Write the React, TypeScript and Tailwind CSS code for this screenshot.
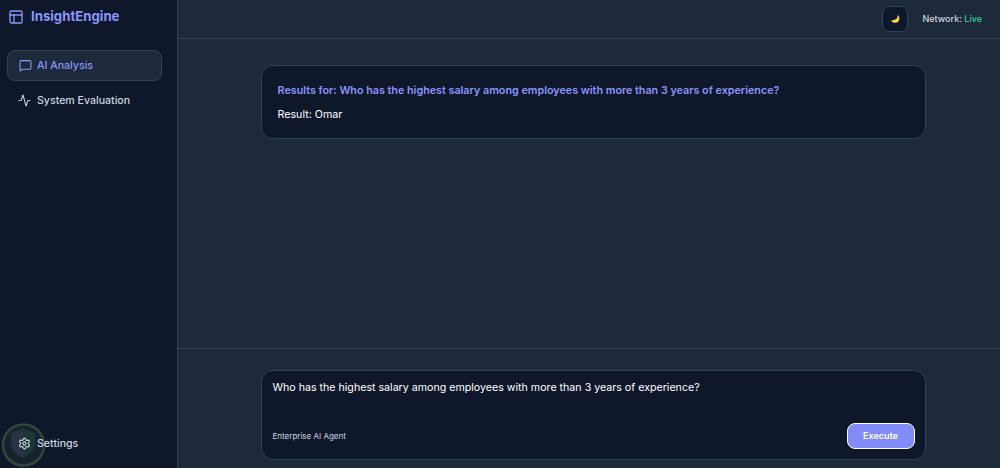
import React from "react";
import { Activity, MessageSquare, PanelsTopLeft, Settings } from "lucide-react";

// Faint shield badge behind the settings row, bottom-left corner
function CornerBadge() {
  return (
    <svg className="absolute left-[1px] top-[422px] pointer-events-none blur-[0.7px]" width="45" height="46" viewBox="0 0 45 46">
      <circle cx="22.5" cy="23" r="20.5" fill="#18222e" stroke="#34453c" strokeWidth="2.5" />
      <path d="M10 11 L22 6 V36 C16 33 10 29 10 22 Z" fill="#283341" />
      <path d="M22 6 L34 11 V22 C34 29 28 33 22 36 Z" fill="#1c3536" />
    </svg>
  );
}

function CrescentIcon() {
  return (
    <svg width="10" height="10" viewBox="0 0 10 10">
      <path d="M7.6 0.6 C8.4 3.4 6.2 6.6 1 6.4 C2.4 9 6.2 9.8 8.4 7.4 C10 5.4 9.6 2.2 7.6 0.6 Z" fill="#fcd34d" />
    </svg>
  );
}

export default function App() {
  return (
    <div className="relative flex h-[468px] w-[1000px] overflow-hidden bg-[#1e293b] font-['Inter',sans-serif]">
      {/* Sidebar */}
      <aside className="relative flex w-[178px] shrink-0 flex-col border-r border-[#334155] bg-[#0f172a]">
        <CornerBadge />
        <div className="flex h-[33px] items-center gap-[7px] pl-[8px] pt-[1px]">
          <PanelsTopLeft className="h-[16px] w-[16px] text-[#8b95fb]" />
          <span className="text-[13.2px] font-bold text-[#8b95fb]">InsightEngine</span>
        </div>
        <nav className="mt-[17px] flex w-[155px] ml-[7px] flex-col gap-[4px]">
          <div className="flex h-[31px] items-center gap-[5px] rounded-[8px] border border-[#334155] bg-[#1e293b] pl-[11px] text-[10.6px] font-medium text-[#8b95fb]">
            <MessageSquare className="h-[13px] w-[13px]" />
            AI Analysis
          </div>
          <div className="flex h-[31px] items-center gap-[6px] pl-[11px] text-[10.6px] font-medium text-[#cbd5e1]">
            <Activity className="h-[13px] w-[13px]" />
            System Evaluation
          </div>
        </nav>
        <div className="relative mt-auto mb-[9px] flex h-[31px] items-center gap-[6px] pl-[18px] text-[10.6px] font-medium text-[#cbd5e1]">
          <Settings className="h-[13px] w-[13px]" />
          Settings
        </div>
      </aside>

      {/* Main */}
      <main className="flex min-w-0 flex-1 flex-col">
        <header className="flex h-[39px] shrink-0 items-center justify-end gap-[14px] border-b border-[#334155] pr-[18px]">
          <div className="mr-[1px] flex h-[26px] w-[26px] items-center justify-center rounded-[7px] border border-[#334155] bg-[#0f172a]">
            <CrescentIcon />
          </div>
          <span className="text-[9px] font-medium text-[#cbd5e1]">
            Network: <span className="text-[#34d399]">Live</span>
          </span>
        </header>

        <section className="flex flex-1 justify-center pt-[26px] pl-[8px]">
          <div className="h-[74px] w-[665px] rounded-[12px] border border-[#334155] bg-[#0f172a] px-[16px] pt-[17px]">
            <p className="text-[10.75px] leading-[16px] font-semibold text-[#8b95fb]">
              Results for: Who has the highest salary among employees with more than 3 years of experience?
            </p>
            <p className="mt-[8px] text-[10.7px] leading-[16px] text-white">Result: Omar</p>
          </div>
        </section>

        <section className="flex h-[120px] shrink-0 justify-center border-t border-[#334155] pt-[21px] pl-[8px]">
          <div className="flex h-[90px] w-[665px] flex-col rounded-[12px] border border-[#334155] bg-[#0f172a] pt-[9px] pr-[10px] pb-[10px] pl-[11px]">
            <p className="text-[10.65px] leading-[16px] text-white">
              Who has the highest salary among employees with more than 3 years of experience?
            </p>
            <div className="mt-auto flex items-center justify-between">
              <span className="text-[8px] text-[#cbd5e1]">Enterprise AI Agent</span>
              <button className="h-[26px] w-[68px] rounded-[8px] border border-white bg-[#818cf8] text-[9px] font-semibold text-white">
                Execute
              </button>
            </div>
          </div>
        </section>
      </main>
    </div>
  );
}
